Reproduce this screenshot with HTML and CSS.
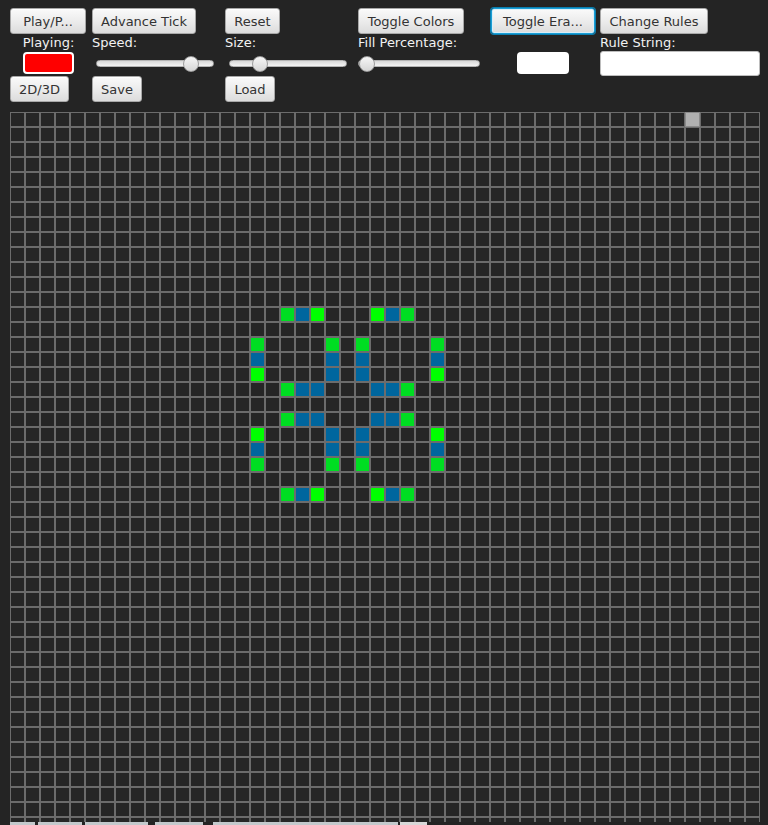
FILE: index.html
```html
<!DOCTYPE html>
<html>
<head>
<meta charset="utf-8">
<title>Life</title>
<link rel="stylesheet" href="styles.css">
</head>
<body>
<div class="toolbar">
  <button class="btn w-play">Play/P...</button>
  <button class="btn w-adv">Advance Tick</button>
  <button class="btn w-reset">Reset</button>
  <button class="btn w-colors">Toggle Colors</button>
  <button class="btn w-era focus">Toggle Era...</button>
  <button class="btn w-rules">Change Rules</button>

  <div class="field center">
    <span class="lbl">Playing:</span>
    <div class="ctl"><div class="swatch red"></div></div>
  </div>
  <div class="field">
    <span class="lbl">Speed:</span>
    <div class="ctl"><div class="slider s-speed"><div class="thumb" style="left: 86px"></div></div></div>
  </div>
  <div class="field">
    <span class="lbl">Size:</span>
    <div class="ctl"><div class="slider s-size"><div class="thumb" style="left: 22px"></div></div></div>
  </div>
  <div class="field">
    <span class="lbl">Fill Percentage:</span>
    <div class="ctl"><div class="slider s-fill"><div class="thumb" style="left: 0px"></div></div></div>
  </div>
  <div class="field center">
    <span class="lbl"></span>
    <div class="ctl"><div class="swatch white"></div></div>
  </div>
  <div class="field">
    <span class="lbl">Rule String:</span>
    <div class="ctl"><input class="text" type="text" value=""></div>
  </div>

  <button class="btn w-2d">2D/3D</button>
  <button class="btn w-save">Save</button>
  <button class="btn w-load">Load</button>
</div>

<div class="board">
  <div class="cells">
    <div class="cell sel" style="grid-area: 1 / 46"></div>

    <div class="cell d" style="grid-area: 14 / 19"></div>
    <div class="cell b" style="grid-area: 14 / 20"></div>
    <div class="cell g" style="grid-area: 14 / 21"></div>
    <div class="cell g" style="grid-area: 14 / 25"></div>
    <div class="cell b" style="grid-area: 14 / 26"></div>
    <div class="cell d" style="grid-area: 14 / 27"></div>

    <div class="cell d" style="grid-area: 16 / 17"></div>
    <div class="cell d" style="grid-area: 16 / 22"></div>
    <div class="cell d" style="grid-area: 16 / 24"></div>
    <div class="cell d" style="grid-area: 16 / 29"></div>

    <div class="cell b" style="grid-area: 17 / 17"></div>
    <div class="cell b" style="grid-area: 17 / 22"></div>
    <div class="cell b" style="grid-area: 17 / 24"></div>
    <div class="cell b" style="grid-area: 17 / 29"></div>

    <div class="cell g" style="grid-area: 18 / 17"></div>
    <div class="cell b" style="grid-area: 18 / 22"></div>
    <div class="cell b" style="grid-area: 18 / 24"></div>
    <div class="cell g" style="grid-area: 18 / 29"></div>

    <div class="cell d" style="grid-area: 19 / 19"></div>
    <div class="cell b" style="grid-area: 19 / 20"></div>
    <div class="cell b" style="grid-area: 19 / 21"></div>
    <div class="cell b" style="grid-area: 19 / 25"></div>
    <div class="cell b" style="grid-area: 19 / 26"></div>
    <div class="cell d" style="grid-area: 19 / 27"></div>

    <div class="cell d" style="grid-area: 21 / 19"></div>
    <div class="cell b" style="grid-area: 21 / 20"></div>
    <div class="cell b" style="grid-area: 21 / 21"></div>
    <div class="cell b" style="grid-area: 21 / 25"></div>
    <div class="cell b" style="grid-area: 21 / 26"></div>
    <div class="cell d" style="grid-area: 21 / 27"></div>

    <div class="cell g" style="grid-area: 22 / 17"></div>
    <div class="cell b" style="grid-area: 22 / 22"></div>
    <div class="cell b" style="grid-area: 22 / 24"></div>
    <div class="cell g" style="grid-area: 22 / 29"></div>

    <div class="cell b" style="grid-area: 23 / 17"></div>
    <div class="cell b" style="grid-area: 23 / 22"></div>
    <div class="cell b" style="grid-area: 23 / 24"></div>
    <div class="cell b" style="grid-area: 23 / 29"></div>

    <div class="cell d" style="grid-area: 24 / 17"></div>
    <div class="cell d" style="grid-area: 24 / 22"></div>
    <div class="cell d" style="grid-area: 24 / 24"></div>
    <div class="cell d" style="grid-area: 24 / 29"></div>

    <div class="cell d" style="grid-area: 26 / 19"></div>
    <div class="cell b" style="grid-area: 26 / 20"></div>
    <div class="cell g" style="grid-area: 26 / 21"></div>
    <div class="cell g" style="grid-area: 26 / 25"></div>
    <div class="cell b" style="grid-area: 26 / 26"></div>
    <div class="cell d" style="grid-area: 26 / 27"></div>
  </div>
</div>

<div class="strip">
  <span class="seg s1"></span>
  <span class="seg s2"></span>
  <span class="seg s3"></span>
  <span class="seg s4"></span>
  <span class="seg s5"></span>
  <span class="seg s6"></span>
</div>
</body>
</html>
```

FILE: styles.css
```css
* { box-sizing: border-box; }

html, body {
  margin: 0;
  padding: 0;
  background: #242424;
  font-family: "DejaVu Sans", "Liberation Sans", sans-serif;
  font-size: 13px;
  width: 768px;
  height: 825px;
  overflow: hidden;
}

.toolbar {
  display: grid;
  grid-template-columns: 77px 128px 128px 128px 104px 160px;
  grid-template-rows: 26px 42px 26px;
  column-gap: 5px;
  padding: 8px 0 0 10px;
  height: 102px;
}

.btn {
  height: 26px;
  padding: 0;
  margin: 0;
  font-family: inherit;
  font-size: 13px;
  color: #333;
  background: linear-gradient(to bottom, #fafafa 0%, #ececec 50%, #dcdcdc 100%);
  border: 1px solid #a8a8a8;
  border-radius: 3px;
  box-shadow: inset 0 1px 0 #ffffff;
  text-align: center;
  justify-self: start;
}

.btn.focus {
  border-color: #1a9ed6;
  box-shadow: 0 0 0 1px #0a7fb0, inset 0 0 0 1px #d8eef8;
}

.w-play { width: 76px; }
.w-adv { width: 104px; }
.w-reset { width: 55px; }
.w-colors { width: 106px; }
.w-era { width: 104px; }
.w-rules { width: 108px; }
.w-2d { width: 59px; }
.w-save { width: 50px; }
.w-load { width: 50px; }

.field {
  display: flex;
  flex-direction: column;
}

.field.center { align-items: center; }

.lbl {
  color: #f2f2f2;
  height: 16px;
  line-height: 16px;
  margin-top: 1px;
}

.ctl {
  flex: 1;
  display: flex;
  align-items: center;
  padding-bottom: 1px;
}

.swatch {
  width: 51px;
  height: 22px;
  border-radius: 4px;
}

.swatch.red {
  background: #ff0000;
  border: 2px solid #ffffff;
  margin-left: -1px;
}

.swatch.white {
  background: #ffffff;
  width: 52px;
  margin-left: -1px;
}

.slider {
  position: relative;
  height: 7px;
  border-radius: 4px;
  border: 1px solid #b4b4b4;
  background: linear-gradient(to bottom, #d9d9d9, #f4f4f4);
}

.s-speed { width: 118px; margin-left: 4px; }
.s-size { width: 118px; margin-left: 4px; }
.s-fill { width: 122px; margin-left: 0; }

.thumb {
  position: absolute;
  top: -5px;
  width: 16px;
  height: 16px;
  border-radius: 50%;
  border: 1px solid #9c9c9c;
  background: linear-gradient(to bottom, #f6f6f6, #d6d6d6);
}

.text {
  width: 160px;
  height: 25px;
  border: 1px solid #bdbdbd;
  border-radius: 3px;
  background: #ffffff;
  margin: 0;
  padding: 0 6px;
  font-family: inherit;
  font-size: 13px;
}

.board {
  margin: 10px 0 0 10px;
  width: 750px;
  height: 710px;
  overflow: hidden;
  background-color: #262626;
  background-image:
    linear-gradient(to right, #6c6c6c 0 1px, transparent 1px 14px, #6c6c6c 14px 15px),
    linear-gradient(to bottom, #6c6c6c 0 1px, transparent 1px 14px, #6c6c6c 14px 15px);
  background-size: 15px 15px;
}

.cells {
  display: grid;
  grid-template-columns: repeat(50, 15px);
  grid-template-rows: repeat(48, 15px);
}

.cell {
  border: 1px solid #6c6c6c;
}

.cell.g { background: #00ff00; }
.cell.d { background: #00dd22; }
.cell.b { background: #00669e; }
.cell.sel { background: #b0b0b0; border-color: #8a8a8a; }

.strip {
  display: flex;
  padding-left: 10px;
  height: 3px;
}

.seg {
  height: 3px;
  background: #c3c9cc;
}

.s1 { width: 25px; }
.s2 { width: 44px; margin-left: 3px; }
.s3 { width: 63px; margin-left: 3px; }
.s4 { width: 48px; margin-left: 7px; }
.s5 { width: 185px; margin-left: 10px; }
.s6 { width: 27px; margin-left: 2px; background: #d8d8d8; }
```
